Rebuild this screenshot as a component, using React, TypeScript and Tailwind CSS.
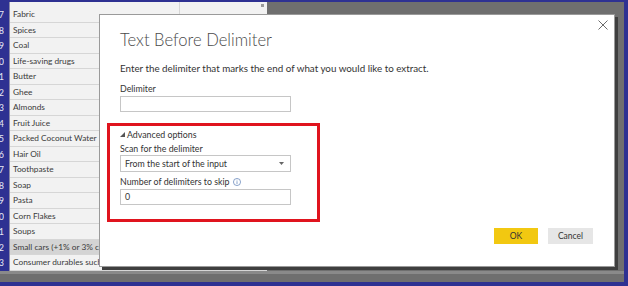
import React from "react";

const rows = [
  "Fabric", "Spices", "Coal", "Life-saving drugs", "Butter", "Ghee", "Almonds", "Fruit Juice",
  "Packed Coconut Water", "Hair Oil", "Toothpaste", "Soap", "Pasta", "Corn Flakes", "Soups",
  "Small cars (+1% or 3% cess)", "Consumer durables such as",
];

const font = { fontFamily: "Lato, 'Open Sans', sans-serif" };

export default function App() {
  return (
    <div className="w-[628px] h-[286px] bg-[#2e3192] pt-[2px] pr-[4px] pb-[4px] overflow-hidden" style={font}>
      <div className="relative w-full h-full bg-[#6f6f6f] flex flex-col">
        {/* grid behind the dialog */}
        <div className="flex">
          <div className="w-[10px] bg-[#2e3192] flex flex-col pt-[5px] border-r border-[#8b8ba8]">
            {rows.map((_, i) => (
              <div key={i} className="h-[15.5px] flex items-center">
                <div className="w-[4px] flex justify-end overflow-hidden">
                  <span className="text-[9px] text-[#e8e8f4] leading-none shrink-0">{i + 7}</span>
                </div>
              </div>
            ))}
          </div>
          <div className="flex flex-col">
            <div className="h-[5px] flex">
              <div className="w-[170px] bg-[#f2f2f2] border-r border-[#d6d6d6]" />
              <div className="w-[87px] bg-[#f2f2f2] relative">
                <div className="absolute right-[3px] bottom-[0px] w-[3px] h-[3px] bg-[#9a9a9a]" />
              </div>
            </div>
            {rows.map((r, i) => (
              <div key={i} className="h-[15.5px] flex">
                <div className={`w-[170px] border-b border-r border-[#d6d6d6] flex items-center pl-[3px] text-[8.3px] text-[#3a3a3a] whitespace-nowrap overflow-hidden ${i === 15 ? "bg-[#d4d4d4]" : "bg-[#f2f2f2]"}`}>
                  {r}
                </div>
                <div className={`w-[87px] border-b border-[#d6d6d6] ${i === 15 ? "bg-[#d4d4d4]" : "bg-[#f2f2f2]"}`} />
              </div>
            ))}
          </div>
        </div>
        <div className="flex-1 border-t-[3px] border-[#8a8a8a]" />

        {/* dialog */}
        <div className="absolute left-[99px] top-[12px] w-[516px] h-[253px] bg-white border border-[#9a9a9a] shadow-[3px_3px_0_#3f3f3f] flex flex-col">
          <button className="absolute right-[5px] top-[4px] w-[12px] h-[12px] flex items-center justify-center">
            <svg width="10" height="10" viewBox="0 0 10 10">
              <path d="M0.5 0.5 L9.5 9.5 M9.5 0.5 L0.5 9.5" stroke="#6b6b6b" strokeWidth="1" fill="none" />
            </svg>
          </button>
          <div className="ml-[20px] mt-[13px] h-[24px] leading-[24px] text-[16.6px] font-light text-[#4a4a4a]">Text Before Delimiter</div>
          <div className="ml-[20px] mt-[9px] h-[14px] leading-[14px] text-[9.8px] text-[#333]">
            Enter the delimiter that marks the end of what you would like to extract.
          </div>
          <div className="ml-[20px] mt-[8px] h-[12px] leading-[12px] text-[8.8px] text-[#333]">Delimiter</div>
          <div className="ml-[20px] mt-[1px] w-[171px] h-[16px] border border-[#c6c6c6]" />

          <div className="ml-[7px] mt-[11px] w-[213px] h-[99px] border-[3px] border-[#e0141e] pl-[10px] pt-[2px] flex flex-col">
            <div className="h-[13px] flex items-center gap-[2px] text-[8.8px] text-[#333]">
              <svg width="5" height="5" viewBox="0 0 5 5"><polygon points="5,0 5,5 0,5" fill="#555" /></svg>
              <span>Advanced options</span>
            </div>
            <div className="mt-[1px] h-[13px] leading-[13px] text-[8.8px] text-[#333]">Scan for the delimiter</div>
            <div className="w-[171px] h-[17px] border border-[#c6c6c6] flex items-center justify-between pl-[4px] pr-[6px] text-[8.8px] text-[#333]">
              <span>From the start of the input</span>
              <svg width="5" height="3" viewBox="0 0 5 3"><polygon points="0,0 5,0 2.5,3" fill="#666" /></svg>
            </div>
            <div className="mt-[3px] h-[13px] flex items-center gap-[3px] text-[8.8px] text-[#333]">
              <span>Number of delimiters to skip</span>
              <svg width="8" height="8" viewBox="0 0 9 9">
                <circle cx="4.5" cy="4.5" r="4" stroke="#5b7fb5" strokeWidth="0.8" fill="none" />
                <rect x="4.1" y="2" width="0.8" height="0.8" fill="#5b7fb5" />
                <rect x="4.1" y="3.6" width="0.8" height="3.2" fill="#5b7fb5" />
              </svg>
            </div>
            <div className="mt-[1px] w-[171px] h-[16px] border border-[#c6c6c6] flex items-center pl-[4px] text-[8.8px] text-[#333]">0</div>
          </div>

          <div className="mt-[6px] mr-[21px] flex justify-end gap-[10px]">
            <button className="w-[44px] h-[16px] bg-[#f2c811] text-[8.5px] text-[#333] flex items-center justify-center">OK</button>
            <button className="w-[45px] h-[16px] bg-[#e6e6e6] text-[8.5px] text-[#333] flex items-center justify-center">Cancel</button>
          </div>
        </div>
      </div>
    </div>
  );
}
